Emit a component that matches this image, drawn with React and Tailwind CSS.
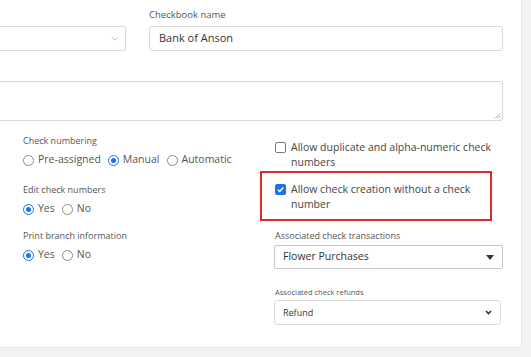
import { ChevronDown } from "lucide-react";

function Radio({ checked, label }) {
  return (
    <label className="flex items-center gap-[4px]">
      {checked ? (
        <span className="w-[11px] h-[11px] rounded-full border-[1.5px] border-[#1a73e8] flex items-center justify-center">
          <span className="w-[5px] h-[5px] rounded-full bg-[#1a73e8]" />
        </span>
      ) : (
        <span className="w-[11px] h-[11px] rounded-full border border-[#8a8a8a]" />
      )}
      <span>{label}</span>
    </label>
  );
}

function Checkbox({ checked, children }) {
  return (
    <div className="flex gap-[5px] leading-[15px]">
      {checked ? (
        <span className="mt-[2px] w-[11px] h-[11px] shrink-0 rounded-[2px] bg-[#1a73e8] flex items-center justify-center">
          <svg width="9" height="9" viewBox="0 0 10 10">
            <path d="M2 5.2 L4.2 7.3 L8 2.8" fill="none" stroke="white" strokeWidth="1.6" />
          </svg>
        </span>
      ) : (
        <span className="mt-[2px] w-[11px] h-[11px] shrink-0 rounded-[2px] border border-[#777]" />
      )}
      <span>{children}</span>
    </div>
  );
}

export default function App() {
  return (
    <div
      className="w-[531px] h-[357px] bg-[#f2f2f2] overflow-hidden text-[#444]"
      style={{ fontFamily: '"Open Sans", sans-serif' }}
    >
      <div className="w-[522px] h-[348px] bg-white border-r border-b border-[#e6e6e6] pt-[8px]">

        {/* Top row */}
        <div className="flex items-end">
          <div className="w-[126px] h-[25px] border border-l-0 border-[#d8d8d8] rounded-r-[3px] flex items-center justify-end pr-[5px]">
            <ChevronDown size={10} strokeWidth={1.5} className="text-[#888]" />
          </div>
          <div className="ml-[23px] w-[354px]">
            <div className="text-[9.5px] leading-[14px] text-[#555] mb-[4px]">Checkbook name</div>
            <div className="h-[25px] border border-[#d8d8d8] rounded-[3px] flex items-center pl-[9px] text-[11px] text-[#333]">
              Bank of Anson
            </div>
          </div>
        </div>

        {/* Notes textarea */}
        <div className="mt-[30px] w-[503px] h-[40px] border border-[#d8d8d8] border-l-0 rounded-r-[3px] relative">
          <svg className="absolute right-[1px] bottom-[1px]" width="7" height="7" viewBox="0 0 7 7">
            <path d="M1 6.5 L6.5 1 M4 6.5 L6.5 4" stroke="#aaa" strokeWidth="1" />
          </svg>
        </div>

        {/* Options */}
        <div className="flex">
          <div className="ml-[23px] w-[237px] pt-[13px] text-[9px] text-[#555]">
            <div className="leading-[14px]">Check numbering</div>
            <div className="mt-[4px] h-[16px] flex items-center gap-[7px] text-[10.5px]">
              <Radio label="Pre-assigned" />
              <Radio checked label="Manual" />
              <Radio label="Automatic" />
            </div>
            <div className="mt-[15px] leading-[14px]">Edit check numbers</div>
            <div className="mt-[4px] h-[16px] flex items-center gap-[7px] text-[10.5px]">
              <Radio checked label="Yes" />
              <Radio label="No" />
            </div>
            <div className="mt-[12px] leading-[14px]">Print branch information</div>
            <div className="mt-[4px] h-[16px] flex items-center gap-[7px] text-[10.5px]">
              <Radio checked label="Yes" />
              <Radio label="No" />
            </div>
          </div>

          <div className="w-[250px] pt-[19px] text-[10.5px] text-[#444]">
            <div className="pl-[15px]">
              <Checkbox>Allow duplicate and alpha-numeric check numbers</Checkbox>
            </div>
            <div className="mt-[1px] w-[232px] h-[50px] border-2 border-[#e0262b] pl-[13px] pr-[8px] pt-[9px]">
              <Checkbox checked>Allow check creation without a check number</Checkbox>
            </div>
            <div className="pl-[15px] mt-[8px] text-[9px] leading-[14px] text-[#555]">
              Associated check transactions
            </div>
            <div className="ml-[14px] mr-[7px] mt-[2px] h-[24px] border border-[#c8c8c8] rounded-[2px] flex items-center justify-between pl-[8px] pr-[8px] text-[10.5px] text-[#333]">
              <span>Flower Purchases</span>
              <svg width="8" height="5" viewBox="0 0 8 5">
                <path d="M0 0 L8 0 L4 5 Z" fill="#333" />
              </svg>
            </div>
            <div className="pl-[15px] mt-[17px] text-[7.5px] leading-[12px] text-[#555]">
              Associated check refunds
            </div>
            <div className="ml-[14px] mr-[9px] mt-[2px] h-[25px] border border-[#dcdcdc] rounded-[3px] flex items-center justify-between pl-[8px] pr-[8px] text-[9px] text-[#333]">
              <span>Refund</span>
              <svg width="7" height="5" viewBox="0 0 7 5">
                <path d="M1 1 L3.5 3.6 L6 1" fill="none" stroke="#333" strokeWidth="1.6" />
              </svg>
            </div>
          </div>
        </div>
      </div>
    </div>
  );
}
